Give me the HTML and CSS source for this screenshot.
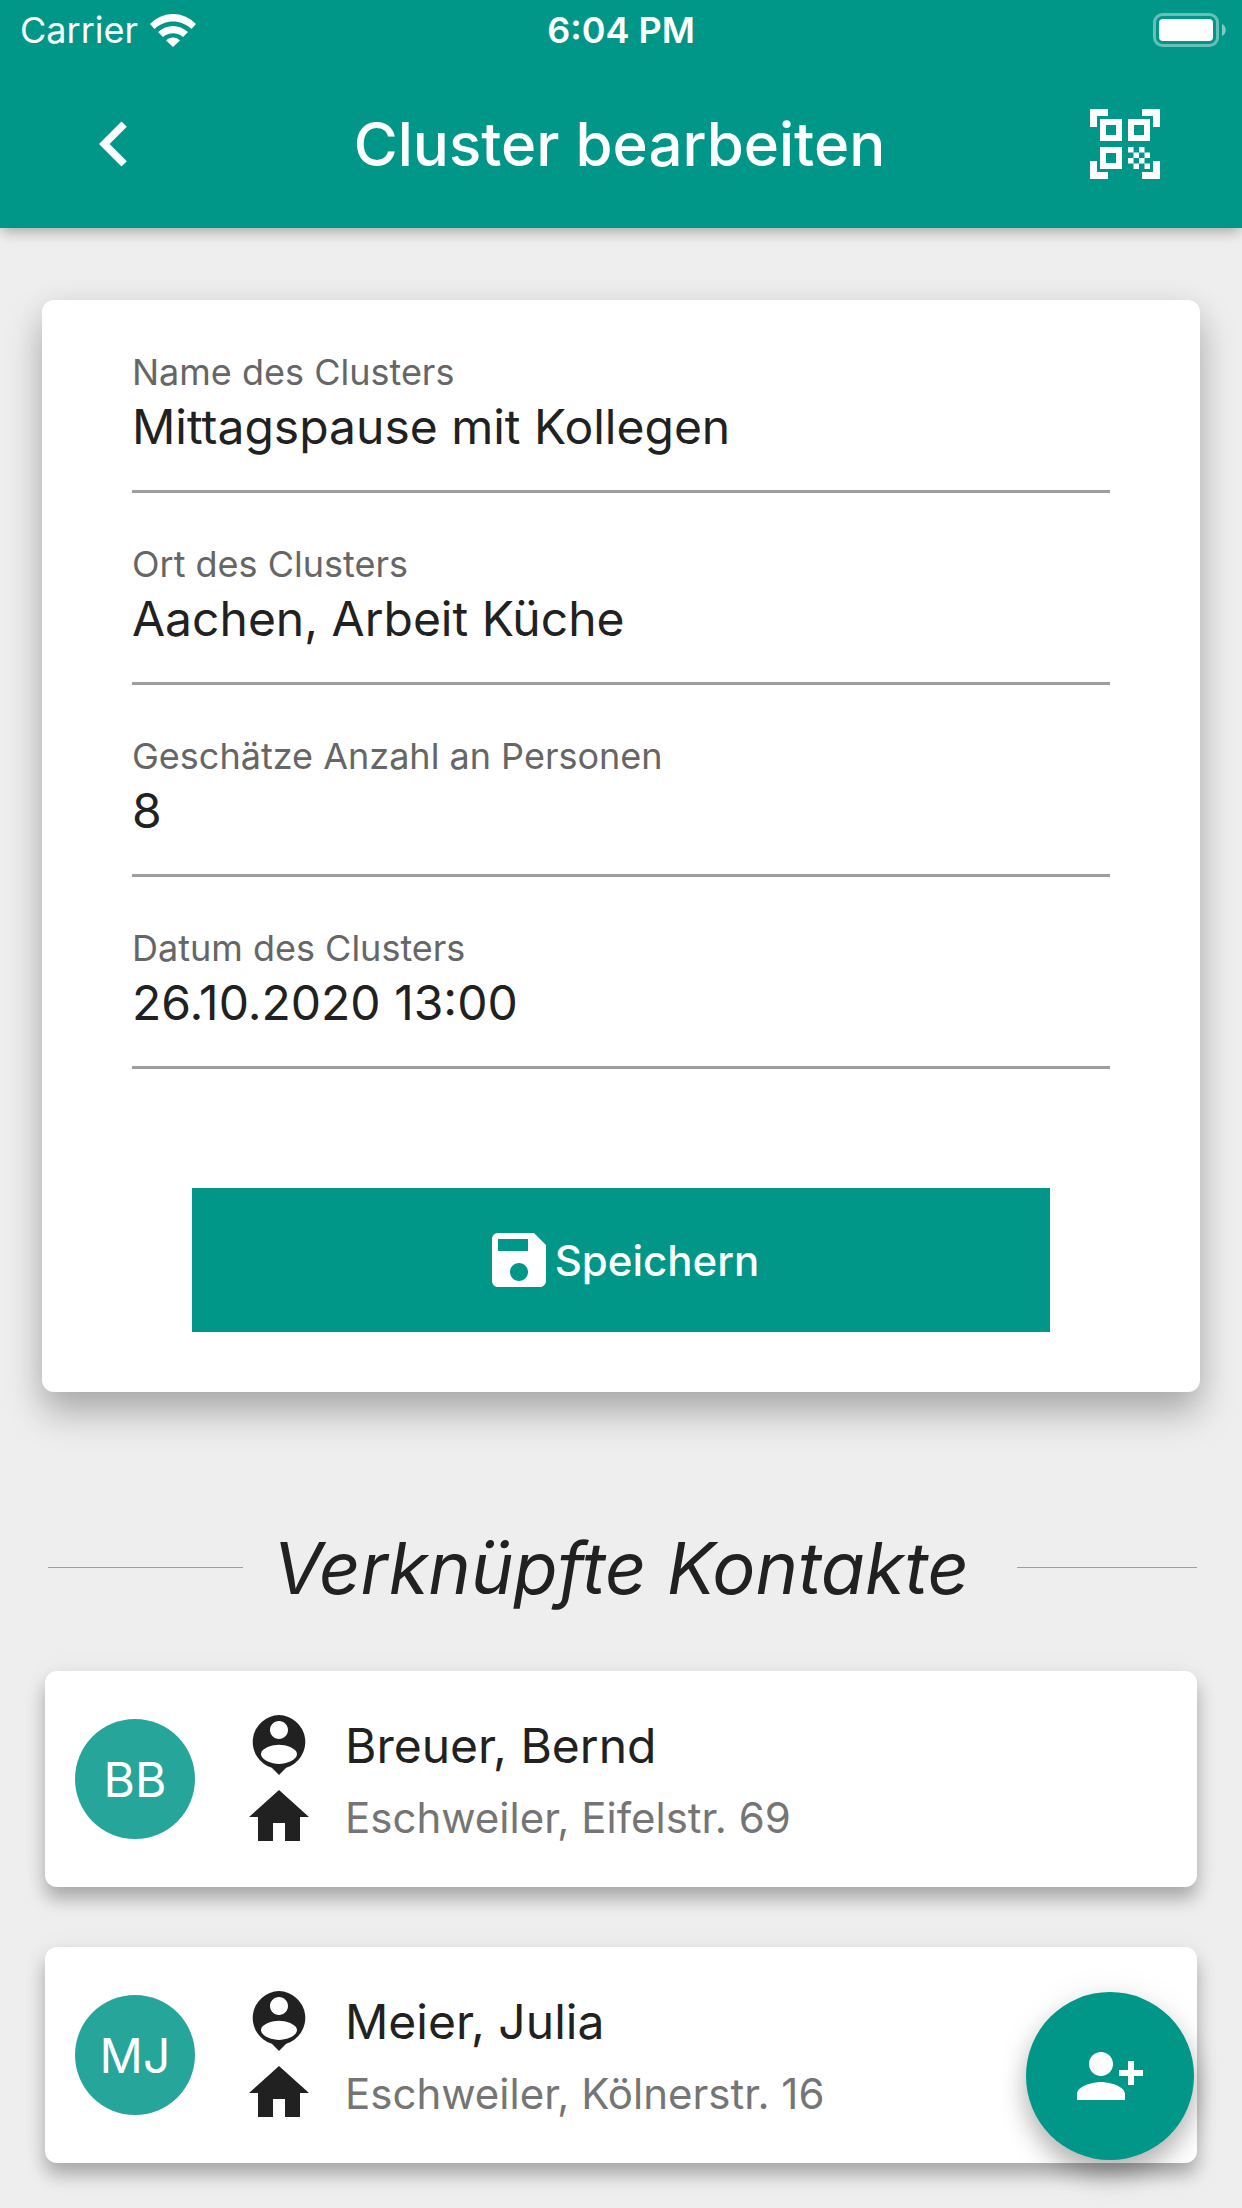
FILE: index.html
```html
<!DOCTYPE html>
<html lang="de">
<head>
<meta charset="utf-8">
<meta name="viewport" content="width=device-width, initial-scale=1">
<title>Cluster bearbeiten</title>
<link rel="stylesheet" href="styles.css">
</head>
<body>
<svg class="sprite" aria-hidden="true">
  <symbol id="icon-person" viewBox="0 0 24 24"><path fill-rule="evenodd" d="M12 2a9 9 0 0 0-2.4 17.6L12 22l2.4-2.4A9 9 0 0 0 12 2zm0 2c1.66 0 3 1.34 3 3s-1.34 3-3 3-3-1.34-3-3 1.34-3 3-3zm0 14.300c-2.5 0-6-1.3-6-3.300 0-2 4-3.080 6-3.080s6 1.080 6 3.080c0 2-3.500 3.300-6 3.300z"/></symbol>
  <symbol id="icon-home" viewBox="0 0 24 24"><path d="M10 20v-6h4v6h5v-8h3L12 3 2 12h3v8z"/></symbol>
</svg>
<header class="app-header">
  <div class="status-bar">
    <div class="status-carrier">
      <span>Carrier</span>
      <svg class="wifi" viewBox="0 0 46 33" aria-hidden="true"><path d="M0 10C13-3.300 33-3.300 46 10l-4.500 5C31 5 15 5 4.500 15zM8 18c9-8 21-8 30 0l-5 5c-6-5-14-5-20 0zM16 26.500c4-4 10-4 14 0L23 33z"/></svg>
    </div>
    <span class="status-time">6:04 PM</span>
    <svg class="battery" viewBox="0 0 74 34" aria-hidden="true"><rect class="battery-case" x="1.500" y="1.500" width="63" height="31" rx="8"/><rect x="6" y="6" width="54" height="22" rx="4"/><path class="battery-cap" d="M69 11c5 2 5 10 0 12z"/></svg>
  </div>
  <div class="toolbar">
    <button class="icon-button" type="button" aria-label="Zurück">
      <svg class="back-icon" viewBox="0 0 24 24"><path d="M15.410 7.410 14 6l-6 6 6 6 1.410-1.410L10.830 12z"/></svg>
    </button>
    <h1 class="title">Cluster bearbeiten</h1>
    <button class="icon-button" type="button" aria-label="QR-Code scannen">
      <svg class="qr-icon" viewBox="0 0 70 70"><path fill-rule="evenodd" d="M0 0h18v7H7v11H0zM52 0h18v18h-7V7H52zM0 52h7v11h11v7H0zM63 52h7v18H52v-7h11zM10 10h22v22H10zm6 6v10h10V16zM38 10h22v22H38zm6 6v10h10V16zM10 38h22v22H10zm6 6v10h10V44z"/><path d="M38 38h5.500v5.500H38zM49 38h5.500v5.500H49zM43.500 43.500H49V49h-5.500zM54.500 43.500H60V49h-5.500zM38 49h5.500v5.500H38zM49 49h5.500v5.500H49zM43.500 54.500H49V60h-5.500zM54.500 54.500H60V60h-5.500z"/></svg>
    </button>
  </div>
</header>
<main class="content">
  <form class="cluster-form">
    <div class="field">
      <label for="name">Name des Clusters</label>
      <input id="name" type="text" value="Mittagspause mit Kollegen">
    </div>
    <div class="field">
      <label for="place">Ort des Clusters</label>
      <input id="place" type="text" value="Aachen, Arbeit Küche">
    </div>
    <div class="field">
      <label for="count">Geschätze Anzahl an Personen</label>
      <input id="count" type="text" inputmode="numeric" value="8">
    </div>
    <div class="field">
      <label for="date">Datum des Clusters</label>
      <input id="date" type="text" value="26.10.2020 13:00">
    </div>
    <button class="save" type="button">
      <svg class="icon" viewBox="0 0 24 24" aria-hidden="true"><path d="M17 3H5c-1.110 0-2 .9-2 2v14c0 1.100.89 2 2 2h14c1.100 0 2-.9 2-2V7l-4-4zm-5 16c-1.660 0-3-1.340-3-3s1.340-3 3-3 3 1.340 3 3-1.340 3-3 3zm3-10H5V5h10v4z"/></svg>
      <span>Speichern</span>
    </button>
  </form>
  <h2 class="section-title">Verknüpfte Kontakte</h2>
  <ul class="contacts">
    <li class="contact">
      <span class="avatar">BB</span>
      <div class="details">
        <svg class="icon" aria-hidden="true"><use href="#icon-person"/></svg>
        <span class="contact-name">Breuer, Bernd</span>
        <svg class="icon" aria-hidden="true"><use href="#icon-home"/></svg>
        <span class="contact-address">Eschweiler, Eifelstr. 69</span>
      </div>
    </li>
    <li class="contact">
      <span class="avatar">MJ</span>
      <div class="details">
        <svg class="icon" aria-hidden="true"><use href="#icon-person"/></svg>
        <span class="contact-name">Meier, Julia</span>
        <svg class="icon" aria-hidden="true"><use href="#icon-home"/></svg>
        <span class="contact-address">Eschweiler, Kölnerstr. 16</span>
      </div>
    </li>
  </ul>
</main>
<button class="fab" type="button" aria-label="Kontakt hinzufügen">
  <svg class="icon" viewBox="0 0 24 24"><path d="M13 8c0-2.210-1.790-4-4-4S5 5.790 5 8s1.790 4 4 4 4-1.790 4-4zm2 2v2h3v3h2v-3h3v-2h-3V7h-2v3h-3zM1 18v2h16v-2c0-2.660-5.330-4-8-4s-8 1.340-8 4z"/></svg>
</button>
</body>
</html>
```
FILE: styles.css
```css
* {
  box-sizing: border-box;
}

body {
  margin: 0;
  background: #eee;
  color: #212121;
  font-family: Inter, "Liberation Sans", sans-serif;
}

svg {
  display: block;
  flex: none;
  fill: currentColor;
}

button {
  border: 0;
  padding: 0;
  color: #fff;
  font: inherit;
}

.sprite {
  position: absolute;
  width: 0;
  height: 0;
}

.icon {
  width: 72px;
  height: 72px;
}

.app-header {
  background: #009688;
  color: #fff;
  box-shadow: 0 6px 12px -3px rgba(0, 0, 0, .2), 0 3px 15px rgba(0, 0, 0, .14);
}

.status-bar {
  display: grid;
  grid-template-columns: 1fr auto 1fr;
  align-items: center;
  height: 60px;
  padding: 0 15px;
  font-size: 36px;
  line-height: 60px;
}

.status-carrier {
  display: flex;
  align-items: center;
  gap: 12px;
  padding-left: 5px;
}

.wifi {
  width: 46px;
  height: 33px;
}

.status-time {
  font-weight: 600;
}

.battery {
  width: 74px;
  height: 34px;
  justify-self: end;
}

.battery-case {
  fill: none;
  stroke: rgba(255, 255, 255, .4);
  stroke-width: 3;
}

.battery-cap {
  fill: rgba(255, 255, 255, .5);
}

.toolbar {
  display: flex;
  align-items: center;
  justify-content: space-between;
  height: 168px;
  padding: 0 72px 0 69px;
}

.icon-button {
  display: grid;
  place-items: center;
  width: 90px;
  height: 90px;
  background: none;
}

.back-icon {
  width: 90px;
  height: 90px;
}

.qr-icon {
  width: 70px;
  height: 70px;
}

.title {
  margin: 0;
  font-size: 60px;
  font-weight: 500;
  line-height: 72px;
}

.content {
  padding: 72px 42px 45px;
}

.cluster-form {
  display: flex;
  flex-direction: column;
  padding: 48px 90px 60px;
  border-radius: 12px;
  background: #fff;
  box-shadow: 0 21px 36px rgba(0, 0, 0, .27), 0 0 30px rgba(0, 0, 0, .05);
}

.field {
  display: flex;
  flex-direction: column;
  height: 192px;
}

.field label {
  color: #666;
  font-size: 36px;
  line-height: 48px;
}

.field input {
  width: 100%;
  height: 97px;
  padding: 0 0 34px;
  border: 0;
  border-bottom: 3px solid #9e9e9e;
  outline: 0;
  background: none;
  color: inherit;
  font: inherit;
  font-size: 48px;
  line-height: 60px;
}

.save {
  display: flex;
  align-items: center;
  justify-content: center;
  height: 144px;
  margin: 72px 60px 0;
  background: #009688;
  font-size: 42px;
  font-weight: 500;
}

.section-title {
  display: flex;
  align-items: center;
  margin: 126px 3px 54px 6px;
  font-size: 72px;
  font-style: italic;
  font-weight: 400;
  line-height: 99px;
}

.section-title::before,
.section-title::after {
  content: "";
  height: 1px;
  background: #9e9e9e;
}

.section-title::before {
  flex: 13;
  margin-right: 30px;
}

.section-title::after {
  flex: 12;
  margin-left: 48px;
}

.contacts {
  display: grid;
  gap: 60px;
  margin: 0 3px;
  padding: 0;
  list-style: none;
}

.contact {
  display: flex;
  align-items: center;
  gap: 48px;
  height: 216px;
  padding: 0 30px;
  border-radius: 12px;
  background: #fff;
  box-shadow: 0 12px 18px rgba(0, 0, 0, .28), 0 0 30px rgba(0, 0, 0, .04);
}

.avatar {
  display: grid;
  flex: none;
  place-items: center;
  width: 120px;
  height: 120px;
  border-radius: 50%;
  background: #26a69a;
  color: #fff;
  font-size: 48px;
}

.details {
  display: grid;
  grid-template-columns: 72px auto;
  align-items: center;
  column-gap: 30px;
  padding-top: 4px;
}

.contact-name {
  font-size: 48px;
}

.contact-address {
  color: #757575;
  font-size: 42px;
}

.fab {
  position: fixed;
  right: 48px;
  bottom: 48px;
  display: grid;
  place-items: center;
  width: 168px;
  height: 168px;
  border-radius: 50%;
  background: #009688;
  box-shadow: 0 15px 27px rgba(0, 0, 0, .28), 0 0 36px rgba(0, 0, 0, .06);
}
```
